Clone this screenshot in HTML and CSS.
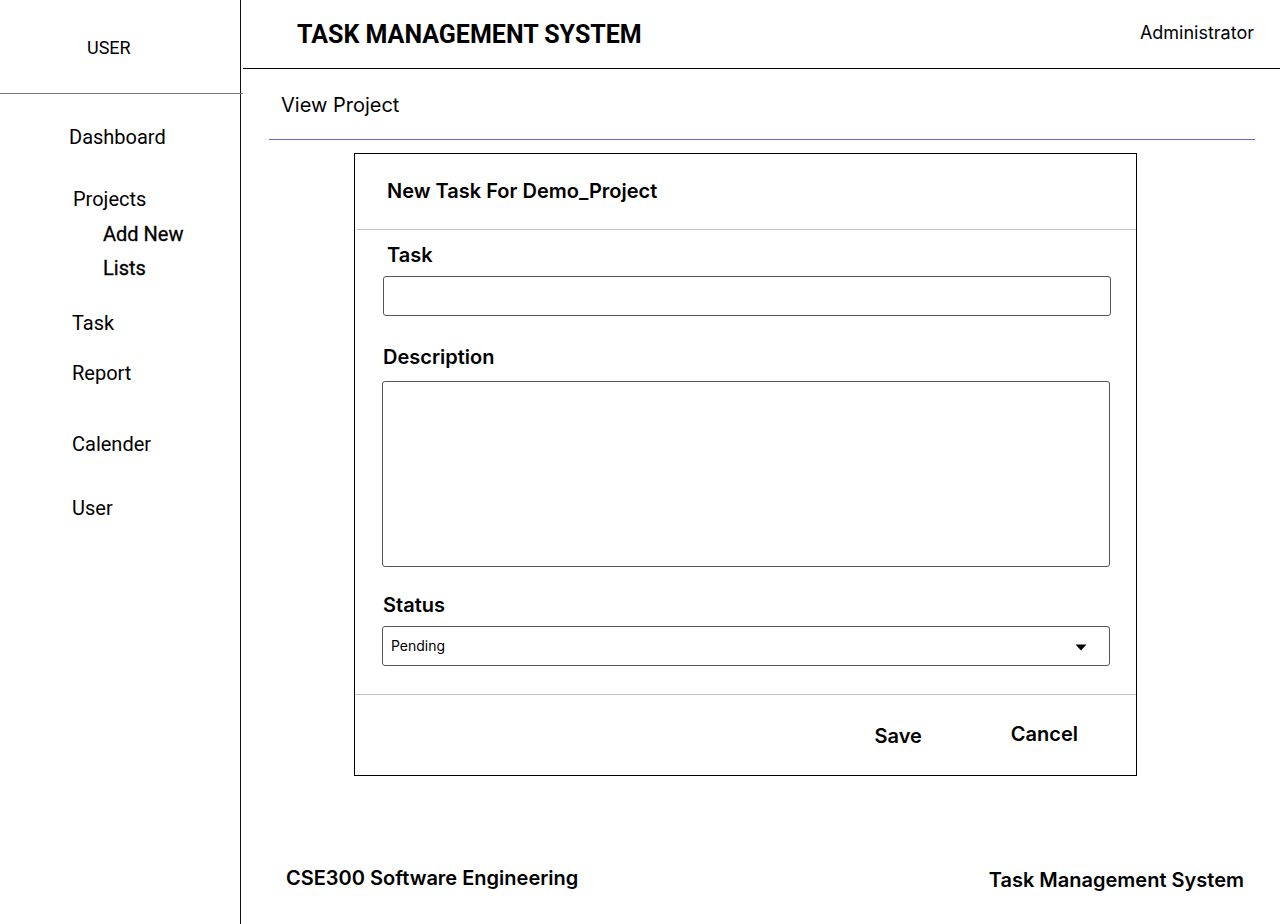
FILE: index.html
```html
<!DOCTYPE html>
<html lang="en">
<head>
<meta charset="utf-8">
<title>Task Management System</title>
<link rel="stylesheet" href="styles.css">
</head>
<body>
<div class="app">
  <aside class="sidebar">
    <div class="user-box">USER</div>
    <nav class="nav">
      <a class="nav-item dash">Dashboard</a>
      <a class="nav-item projects">Projects</a>
      <a class="nav-item sub addnew">Add New</a>
      <a class="nav-item sub lists">Lists</a>
      <a class="nav-item task">Task</a>
      <a class="nav-item report">Report</a>
      <a class="nav-item calender">Calender</a>
      <a class="nav-item user">User</a>
    </nav>
  </aside>
  <main class="main">
    <header class="topbar">
      <h1 class="app-title">TASK MANAGEMENT SYSTEM</h1>
      <span class="role">Administrator</span>
    </header>
    <div class="page-title">View Project</div>
    <section class="card">
      <div class="card-head">New Task For Demo_Project</div>
      <div class="card-body">
        <label class="label label-task">Task</label>
        <div class="input"></div>
        <label class="label label-desc">Description</label>
        <div class="textarea"></div>
        <label class="label label-status">Status</label>
        <div class="select">
          <span class="select-value">Pending</span>
          <svg class="caret" width="12" height="7" viewBox="0 0 12 7"><path d="M0.5 0.5 L11.5 0.5 L6 6.5 Z" fill="#000"/></svg>
        </div>
      </div>
      <div class="card-foot">
        <button class="btn btn-save">Save</button>
        <button class="btn btn-cancel">Cancel</button>
      </div>
    </section>
    <footer class="page-foot">
      <span class="foot-left">CSE300 Software Engineering</span>
      <span class="foot-right">Task Management System</span>
    </footer>
  </main>
</div>
</body>
</html>
```
FILE: styles.css
```css
* { box-sizing: border-box; }
html, body { margin: 0; padding: 0; background: #fff; }
body {
  font-family: Inter, "Liberation Sans", sans-serif;
  color: #000;
  width: 1280px;
  height: 924px;
  overflow: hidden;
}
.app {
  display: grid;
  grid-template-columns: 241px 1fr;
  height: 924px;
}
.sidebar {
  border-right: 1px solid #111;
  font-family: Roboto, "Liberation Sans", sans-serif;
}
.user-box {
  height: 94px;
  border-bottom: 1px solid #777;
  margin-right: -3px;
  padding: 36px 0 0 87px;
  font-size: 18px;
  line-height: 24px;
}
.nav { display: flex; flex-direction: column; }
.nav-item {
  display: block;
  font-size: 20px;
  line-height: 24px;
  padding-left: 72px;
  color: #000;
}
.nav-item.sub { padding-left: 103px; font-weight: 400; -webkit-text-stroke: 0.3px #000; }
.nav-item.dash { margin-top: 31px; padding-left: 69px; }
.nav-item.projects { margin-top: 38px; padding-left: 73px; }
.nav-item.addnew { margin-top: 11px; }
.nav-item.lists { margin-top: 10px; }
.nav-item.task { margin-top: 31px; }
.nav-item.report { margin-top: 26px; }
.nav-item.calender { margin-top: 47px; }
.nav-item.user { margin-top: 40px; }

.main { display: flex; flex-direction: column; min-width: 0; }
.topbar {
  height: 69px;
  border-bottom: 1px solid #000;
  margin-left: 2px;
  display: flex;
  align-items: center;
  justify-content: space-between;
  padding: 0 26px 0 54px;
}
.app-title {
  margin: 0;
  font-family: Roboto, "Liberation Sans", sans-serif;
  font-weight: 700;
  font-size: 25px;
  line-height: 28px;
  margin-top: 2px;
}
.role { font-size: 18px; line-height: 24px; margin-bottom: 2px; }

.page-title {
  margin: 0 25px 0 28px;
  padding: 24px 0 0 12px;
  height: 71px;
  border-bottom: 1px solid #6b63d6;
  font-size: 20px;
  line-height: 24px;
}
.card {
  margin: 13px 0 0 113px;
  width: 783px;
  height: 623px;
  border: 1px solid #000;
  display: flex;
  flex-direction: column;
}
.card-head {
  height: 76px;
  padding: 25px 0 0 30px;
  border-bottom: 1px solid #c4c4c4;
  margin-left: 2px;
  font-size: 20px;
  font-weight: 600;
  line-height: 24px;
}
.card-body {
  padding: 13px 25px 0 28px;
  height: 465px;
  border-bottom: 1px solid #c4c4c4;
  display: flex;
  flex-direction: column;
}
.label {
  display: block;
  font-size: 20px;
  font-weight: 600;
  line-height: 24px;
}
.label-task { padding-left: 4px; }
.label-desc { margin-top: 29px; }
.label-status { margin-top: 26px; }
.input, .textarea, .select {
  border: 1px solid #555;
  border-radius: 3px;
  background: #fff;
  margin-top: 9px;
}
.input { height: 40px; width: 728px; }
.textarea { height: 186px; width: 728px; margin-top: 12px; margin-left: -1px; }
.select {
  height: 40px;
  width: 728px;
  margin-left: -1px;
  display: flex;
  align-items: center;
  justify-content: space-between;
  padding: 0 22px 0 8px;
}
.select-value { font-size: 14px; line-height: 18px; }
.caret { display: block; margin-top: 2px; }

.card-foot {
  flex: 1;
  display: flex;
  justify-content: flex-end;
  align-items: center;
  padding: 0 58px 0 0;
  gap: 89px;
}
.btn {
  font-family: Inter, "Liberation Sans", sans-serif;
  font-size: 20px;
  font-weight: 600;
  line-height: 24px;
  background: none;
  border: 0;
  padding: 0;
  color: #000;
}
.btn-save { margin-top: 2px; }
.btn-cancel { margin-top: -2px; }

.page-foot {
  margin-top: auto;
  padding: 0 36px 32px 45px;
  display: flex;
  justify-content: space-between;
  align-items: flex-end;
  font-size: 20px;
  font-weight: 600;
  line-height: 24px;
}
.foot-left { margin-bottom: 2px; }
```
